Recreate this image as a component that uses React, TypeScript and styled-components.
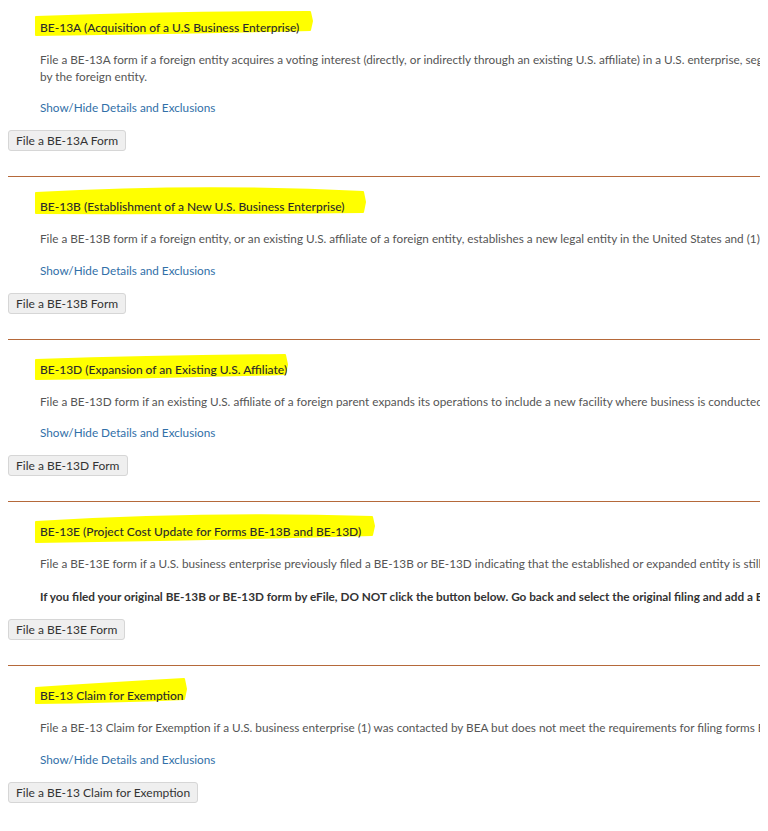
import React from "react";
import styled, { createGlobalStyle } from "styled-components";

const GlobalStyle = createGlobalStyle`
  html {
    overflow-x: hidden;
    background: #ffffff;
  }
  body {
    margin: 8px;
    font-family: Lato, "Open Sans", Arial, sans-serif;
    font-size: 12px;
    color: #555555;
  }
`;

const Page = styled.div`
  width: 1400px;
  padding-top: 12px;
`;

const Section = styled.section`
  display: flex;
  flex-direction: column;
  align-items: flex-start;
`;

const Content = styled.div`
  padding-left: 32px;
  display: flex;
  flex-direction: column;
  align-items: flex-start;
  gap: 16px;
`;

const Heading = styled.h3`
  position: relative;
  z-index: 0;
  margin: 0;
  font-size: 12px;
  line-height: 16px;
  font-weight: 500;
  color: #2b2b2b;
`;

const Marker = styled.svg`
  position: absolute;
  left: 0;
  top: 0;
  overflow: visible;
  z-index: -1;
  pointer-events: none;
`;

const Text = styled.p<{ $strong?: boolean }>`
  margin: 0;
  font-size: 11.75px;
  line-height: 16.5px;
  font-weight: ${(p) => (p.$strong ? 700 : 400)};
  color: ${(p) => (p.$strong ? "#333333" : "#555555")};
  white-space: nowrap;
`;

const Toggle = styled.a`
  margin-top: -1px;
  font-size: 11.75px;
  line-height: 16px;
  color: #3170a8;
  text-decoration: none;
  cursor: pointer;
`;

const FormButton = styled.button`
  margin-top: 14px;
  font-family: Lato, "Open Sans", Arial, sans-serif;
  font-size: 12px;
  line-height: 15px;
  color: #333333;
  background: #efefef;
  border: 1px solid #d6d6d6;
  border-radius: 3px;
  padding: 2px 7px;
  cursor: pointer;
`;

const Rule = styled.hr`
  border: 0;
  border-top: 1px solid #b5693a;
  margin: 25px 0 22px;
  height: 0;
`;

type Mark = { w: number; lt: number; lb: number; rt: number; rb: number; mid: number };

const Highlight = ({ m }: { m: Mark }) => {
  const d = `M -4 ${m.lt} Q ${m.w / 2} ${m.mid} ${m.w} ${m.rt} L ${m.w + 2} ${(m.rt + m.rb) / 2} L ${m.w} ${m.rb} Q ${m.w / 2} ${(m.lb + m.rb) / 2 + 1} -4 ${m.lb} Z`;
  return (
    <Marker width={m.w} height={16}>
      <path d={d} fill="#ffff00" stroke="#ffff00" strokeWidth={2} strokeLinejoin="round" />
    </Marker>
  );
};

type Entry = {
  title: string;
  mark: Mark;
  lines: { text: React.ReactNode; strong?: boolean }[];
  toggle: boolean;
  button: string;
};

const entries: Entry[] = [
  {
    title: "BE-13A (Acquisition of a U.S Business Enterprise)",
    mark: { w: 270, lt: -3, lb: 15, rt: -8, rb: 10, mid: -8 },
    lines: [
      {
        text: (
          <>
            File a BE-13A form if a foreign entity acquires a voting interest (directly, or indirectly through an existing U.S. affiliate) in a U.S. enterprise, segment, or operating unit that will be operated as a separate legal entity
            <br />
            by the foreign entity.
          </>
        ),
      },
    ],
    toggle: true,
    button: "File a BE-13A Form",
  },
  {
    title: "BE-13B (Establishment of a New U.S. Business Enterprise)",
    mark: { w: 323, lt: -6, lb: 14, rt: -7, rb: 13, mid: -15 },
    lines: [
      {
        text: "File a BE-13B form if a foreign entity, or an existing U.S. affiliate of a foreign entity, establishes a new legal entity in the United States and (1) the expected total cost is over $3 million",
      },
    ],
    toggle: true,
    button: "File a BE-13B Form",
  },
  {
    title: "BE-13D (Expansion of an Existing U.S. Affiliate)",
    mark: { w: 245, lt: -2, lb: 17, rt: -7, rb: 12, mid: -6 },
    lines: [
      {
        text: "File a BE-13D form if an existing U.S. affiliate of a foreign parent expands its operations to include a new facility where business is conducted and the expected total cost is over $3 million",
      },
    ],
    toggle: true,
    button: "File a BE-13D Form",
  },
  {
    title: "BE-13E (Project Cost Update for Forms BE-13B and BE-13D)",
    mark: { w: 332, lt: -2, lb: 18, rt: -7, rb: 11, mid: -12 },
    lines: [
      {
        text: "File a BE-13E form if a U.S. business enterprise previously filed a BE-13B or BE-13D indicating that the established or expanded entity is still under construction.",
      },
      {
        text: "If you filed your original BE-13B or BE-13D form by eFile, DO NOT click the button below. Go back and select the original filing and add a BE-13E to it.",
        strong: true,
      },
    ],
    toggle: false,
    button: "File a BE-13E Form",
  },
  {
    title: "BE-13 Claim for Exemption",
    mark: { w: 144, lt: 0, lb: 15, rt: -9, rb: 11, mid: -5 },
    lines: [
      {
        text: "File a BE-13 Claim for Exemption if a U.S. business enterprise (1) was contacted by BEA but does not meet the requirements for filing forms BE-13A, BE-13B, BE-13D, or BE-13E.",
      },
    ],
    toggle: true,
    button: "File a BE-13 Claim for Exemption",
  },
];

export default function App() {
  return (
    <>
      <GlobalStyle />
      <Page>
        {entries.map((e, i) => (
          <React.Fragment key={e.title}>
            {i > 0 && <Rule />}
            <Section>
              <Content>
                <Heading>
                  <Highlight m={e.mark} />
                  {e.title}
                </Heading>
                {e.lines.map((l, j) => (
                  <Text key={j} $strong={l.strong}>
                    {l.text}
                  </Text>
                ))}
                {e.toggle && <Toggle>Show/Hide Details and Exclusions</Toggle>}
              </Content>
              <FormButton type="button">{e.button}</FormButton>
            </Section>
          </React.Fragment>
        ))}
      </Page>
    </>
  );
}
